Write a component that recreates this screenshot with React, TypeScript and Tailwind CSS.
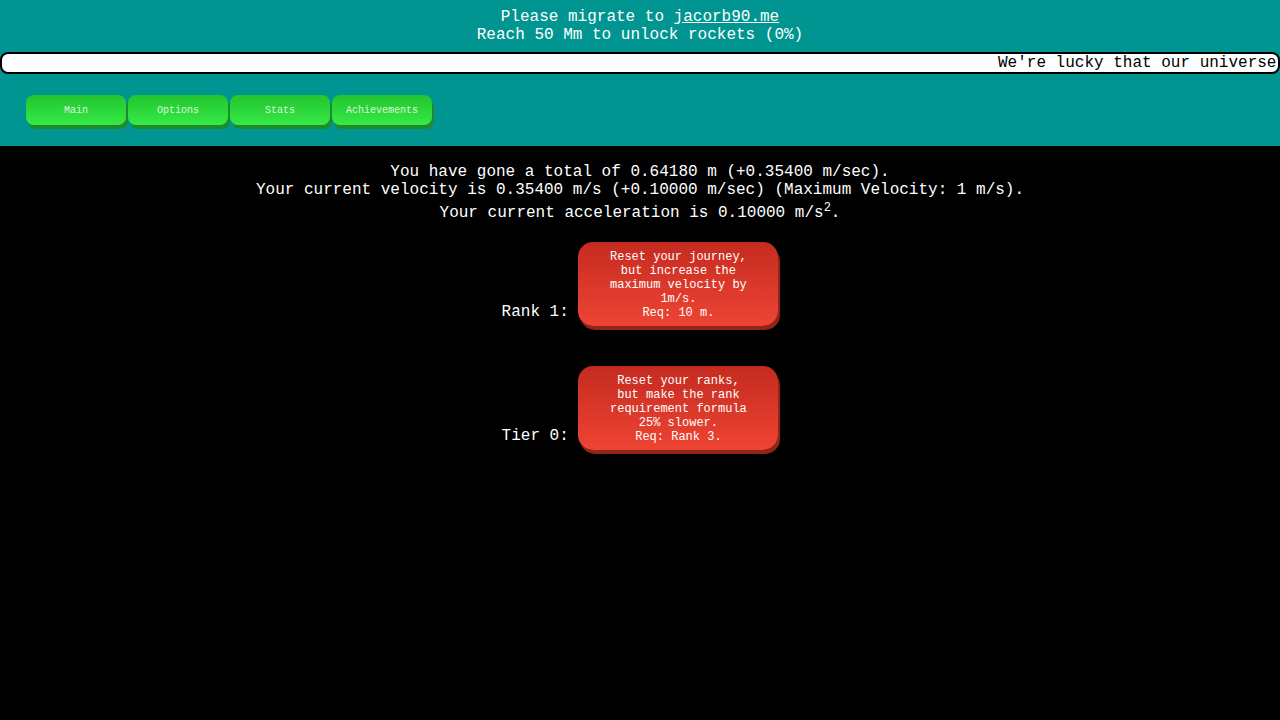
const tabs = ['Main', 'Options', 'Stats', 'Achievements']

const resets = [
  {
    label: 'Rank 1:',
    lines: ['Reset your journey,', 'but increase the', 'maximum velocity by', '1m/s.', 'Req: 10 m.'],
  },
  {
    label: 'Tier 0:',
    lines: ['Reset your ranks,', 'but make the rank', 'requirement formula', '25% slower.', 'Req: Rank 3.'],
  },
]

export default function App() {
  return (
    <div className="min-h-[720px] bg-black text-white font-['Liberation_Mono',monospace] text-[16px] leading-[18px]">
      <div className="h-[146px] bg-[#009591] pt-[8px]">
        <div className="text-center">
          Please migrate to <a className="underline">jacorb90.me</a>
        </div>
        <div className="text-center">Reach 50 Mm to unlock rockets (0%)</div>

        <div className="mt-[8px] h-[22px] overflow-hidden whitespace-nowrap rounded-[8px] border-2 border-black bg-white pl-[996px] text-black">
          We're lucky that our universe's laws of physics allow such things.
        </div>

        <div className="mt-[21px] flex gap-[2px] pl-[26px]">
          {tabs.map((tab) => (
            <button
              key={tab}
              className="h-[30px] w-[100px] rounded-[8px] bg-gradient-to-b from-[#22c42f] to-[#36ea45] pt-[2px] text-[10px] leading-[12px] text-[#dff5df] shadow-[2px_4px_0_#1f8a2b]"
            >
              {tab}
            </button>
          ))}
        </div>
      </div>

      <div className="pt-[17px] text-center">
        <div>You have gone a total of 0.64180 m (+0.35400 m/sec).</div>
        <div>Your current velocity is 0.35400 m/s (+0.10000 m/sec) (Maximum Velocity: 1 m/s).</div>
        <div className="pt-[5px]">
          Your current acceleration is 0.10000 m/s<sup className="text-[12px]">2</sup>.
        </div>
      </div>

      <div className="mt-[20px] flex flex-col gap-[40px]">
        {resets.map((r) => (
          <div key={r.label} className="text-center">
            {r.label}{' '}
            <div className="inline-block h-[84px] w-[200px] cursor-pointer rounded-[15px] bg-gradient-to-b from-[#c42b1f] to-[#ee4434] pt-[8px] align-baseline text-[12px] leading-[14px] text-white shadow-[2px_4px_0_#922418]">
              {r.lines.map((l) => (
                <div key={l}>{l}</div>
              ))}
            </div>
          </div>
        ))}
      </div>
    </div>
  )
}
